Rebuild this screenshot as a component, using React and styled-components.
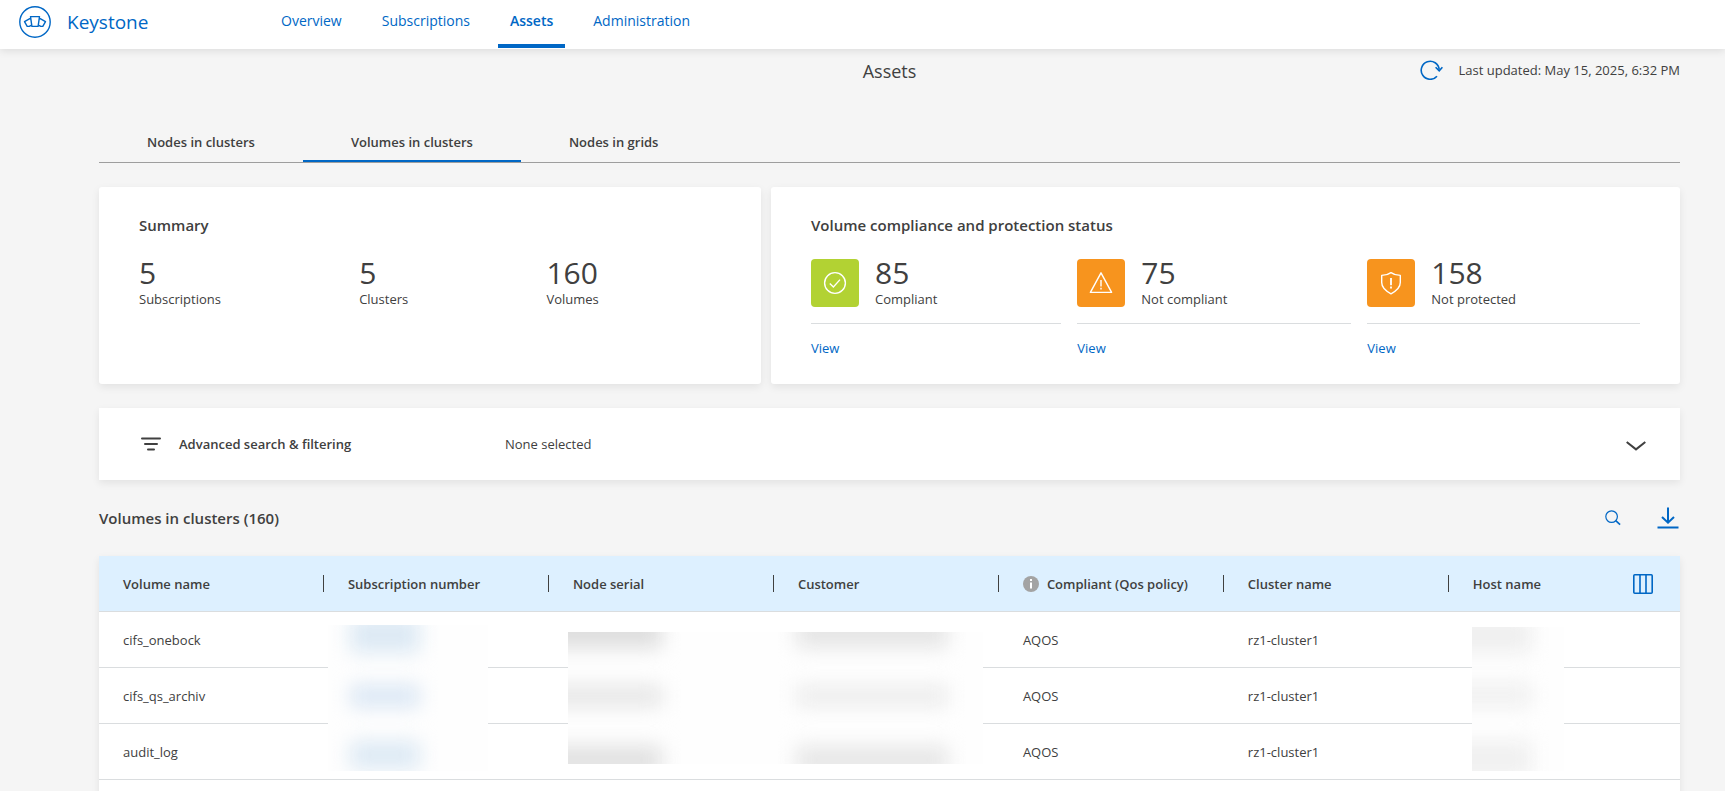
import React from "react";
import styled, { createGlobalStyle } from "styled-components";

const blue = "#0067c5";
const ink = "#404040";
const line = "#dadddf";

const GlobalStyle = createGlobalStyle`
  *, *::before, *::after { box-sizing: border-box; }
  body {
    margin: 0;
    background: #f5f5f5;
    color: ${ink};
    font-family: "Open Sans", "Noto Sans", sans-serif;
    font-size: 13px;
    line-height: 20px;
  }
  h1, h2, h3, p { margin: 0; }
  a { color: ${blue}; text-decoration: none; }
  button {
    display: inline-flex;
    align-items: center;
    padding: 0;
    border: 0;
    background: none;
    color: inherit;
    font: inherit;
    cursor: pointer;
  }
  svg { display: block; flex: none; }
`;

const Page = styled.div`
  height: 100vh;
  overflow: hidden;
`;

const Header = styled.header`
  position: relative;
  display: flex;
  height: 49px;
  padding-left: 19px;
  background: #fff;
  box-shadow: 0 2px 8px rgba(0, 0, 0, 0.1);
`;

const Brand = styled.a`
  display: flex;
  align-items: center;
  gap: 16px;
  width: 250px;
  padding-bottom: 6px;
  font-size: 19px;
`;

const BrandName = styled.span``;

const Nav = styled.nav`
  display: flex;
  gap: 16px;
  height: 48px;
`;

const NavLink = styled.a`
  padding: 10px 12px 0;
  border-bottom: 4px solid ${(p) => (p.$active ? blue : "transparent")};
  font-size: 14px;
  line-height: 22px;
  font-weight: ${(p) => (p.$active ? 600 : 400)};
`;

const Main = styled.main`
  padding: 10px 45px 0 99px;
`;

const TitleBar = styled.div`
  display: grid;
  grid-template-columns: 1fr auto 1fr;
  align-items: center;
  height: 24px;
`;

const PageTitle = styled.h1`
  grid-column: 2;
  font-size: 18px;
  font-weight: 400;
  line-height: 24px;
`;

const Updated = styled.div`
  display: flex;
  align-items: center;
  justify-content: flex-end;
  gap: 16px;
  padding-bottom: 2px;
`;

const Tabs = styled.div`
  display: flex;
  height: 40px;
  margin-top: 40px;
  border-bottom: 1px solid #9e9e9e;
`;

const Tab = styled.button`
  && {
    padding: 0 48px;
    border-bottom: 2px solid ${(p) => (p.$active ? blue : "transparent")};
    font-weight: 600;
  }
`;

const Cards = styled.div`
  display: grid;
  grid-template-columns: 662fr 909fr;
  gap: 10px;
  margin-top: 24px;
`;

const Card = styled.section`
  height: 197px;
  padding: 26px 40px 0;
  border-radius: 3px;
  background: #fff;
  box-shadow: 0 3px 8px rgba(0, 0, 0, 0.08);
`;

const CardTitle = styled.h2`
  font-size: 15px;
  line-height: 24px;
  font-weight: 600;
`;

const Stats = styled.div`
  display: flex;
  gap: 16px;
  margin-top: 22px;
`;

const Stat = styled.div`
  flex: 1 1 auto;
`;

const StatHead = styled.div`
  display: flex;
  gap: 16px;
  height: 48px;
`;

const StatValue = styled.p`
  padding-bottom: 2px;
  font-size: 30px;
  line-height: 28px;
`;

const StatLabel = styled.p`
  line-height: 20px;
`;

const StatLink = styled.div`
  margin-top: 16px;
  padding-top: 14px;
  border-top: 1px solid ${line};
`;

const Badge = styled.div`
  display: grid;
  place-items: center;
  width: 48px;
  height: 48px;
  border-radius: 4px;
  background: ${(p) => p.$color};
`;

const FilterBar = styled.section`
  display: flex;
  align-items: center;
  height: 72px;
  margin-top: 24px;
  padding: 0 34px 0 42px;
  background: #fff;
  box-shadow: 0 3px 8px rgba(0, 0, 0, 0.08);
`;

const FilterTitle = styled.h2`
  width: 326px;
  margin-left: 18px;
  font-size: 13px;
  font-weight: 600;
`;

const FilterState = styled.p`
  flex: 1;
`;

const ExpandButton = styled.button`
  && { padding-top: 3px; }
`;

const TableBar = styled.div`
  display: flex;
  align-items: center;
  justify-content: space-between;
  height: 24px;
  margin: 26px 0;
`;

const Actions = styled.div`
  display: flex;
  gap: 36px;
  padding-right: 1px;
  color: ${blue};
`;

const Table = styled.table`
  width: 100%;
  table-layout: fixed;
  border-collapse: separate;
  border-spacing: 0;
  background: #fff;
  box-shadow: 0 3px 8px rgba(0, 0, 0, 0.08);
`;

const HeadCell = styled.th`
  width: ${(p) => (p.$last ? "auto" : "14.23%")};
  height: 56px;
  padding: 0 0 0 24px;
  border-bottom: 1px solid ${line};
  background: #ddf0ff;
  text-align: left;
  font-weight: 600;
`;

const HeadContent = styled.div`
  display: flex;
  align-items: center;
  gap: 8px;
  padding-right: ${(p) => (p.$last ? "27px" : "0")};
  border-right: ${(p) => (p.$last ? "0" : `1px solid ${ink}`)};
  height: 17px;
  white-space: nowrap;

  button { margin-left: auto; color: ${blue}; }
`;

const Cell = styled.td`
  position: relative;
  height: 56px;
  padding: 0 24px;
  border-bottom: 1px solid ${line};
`;

const Veil = styled.div`
  position: absolute;
  z-index: 1;
  top: ${(p) => p.$top}px;
  left: ${(p) => p.$left}px;
  width: ${(p) => p.$width}px;
  height: ${(p) => p.$height}px;
  overflow: hidden;
  background: #fefefe;
`;

const Smudge = styled.span`
  position: absolute;
  left: ${(p) => p.$x}px;
  top: ${(p) => p.$y}px;
  width: ${(p) => p.$w}px;
  height: ${(p) => p.$h}px;
  background: ${(p) => p.$color};
  filter: blur(10px);
`;

const LogoIcon = () => (
  <svg width="32" height="32" viewBox="0 0 32 32" fill="none" stroke={blue} strokeWidth="1.4" strokeLinejoin="round">
    <circle cx="16" cy="16" r="15.2" />
    <path d="M11.500 10.600h9l-1.400 9.800h-6.200z" />
    <path d="M11.800 13l-1-.4-5.300 3 2.700 4.800h2l2-1M20.200 13l1-.4 5.300 3-2.700 4.800h-2l-2-1" />
  </svg>
);

const RefreshIcon = () => (
  <svg width="23" height="20" viewBox="0 0 23 20" fill="none" stroke={blue} strokeWidth="1.6">
    <path d="M17 16.2A9 9 0 1 1 19.2 9.6" />
    <path d="M15.6 7.2l3.6 3.6 3.2-3.6" />
  </svg>
);

const CheckIcon = () => (
  <svg width="24" height="24" viewBox="0 0 24 24" fill="none" stroke="#fff" strokeWidth="1.4">
    <circle cx="12" cy="12" r="10.4" />
    <path d="M6.8 12.4l3.6 3.5 6.6-7.3" />
  </svg>
);

const WarningIcon = () => (
  <svg width="24" height="24" viewBox="0 0 24 24" fill="none" stroke="#fff" strokeWidth="1.4" strokeLinejoin="round">
    <path d="M12 1.8L22.6 21.4H1.4z" />
    <path d="M12 9v6.4M12 16.8v1.8" />
  </svg>
);

const ShieldIcon = () => (
  <svg width="24" height="24" viewBox="0 0 24 24" fill="none" stroke="#fff" strokeWidth="1.4" strokeLinejoin="round">
    <path d="M12 1.6c2.8 2 6 2.7 9.3 2.8v7.2c0 5-4.3 8.6-9.3 11.2-5-2.6-9.3-6.2-9.3-11.2V4.4C6 4.3 9.2 3.600 12 1.600z" />
    <path d="M12 7v7.2M12 15.6v1.9" strokeWidth="1.8" />
  </svg>
);

const FilterIcon = () => (
  <svg width="20" height="14" viewBox="0 0 20 14" fill="none" stroke={ink} strokeWidth="2" strokeLinecap="round">
    <path d="M1 1.5h18M4 7h12M7 12.5h6" />
  </svg>
);

const ChevronIcon = () => (
  <svg width="20" height="10" viewBox="0 0 20 10" fill="none" stroke={ink} strokeWidth="2">
    <path d="M.7 1l9.3 7.4L19.3 1" />
  </svg>
);

const SearchIcon = () => (
  <svg width="16" height="16" viewBox="0 0 16 16" fill="none" stroke="currentColor" strokeWidth="1.2">
    <circle cx="6.6" cy="6.6" r="5.8" />
    <path d="M10.7 10.700l4.400 4" strokeWidth="1.600" />
  </svg>
);

const DownloadIcon = () => (
  <svg width="22" height="22" viewBox="0 0 22 22" fill="none" stroke="currentColor" strokeWidth="2">
    <path d="M11 .5v15M5 10l6 5.700L17 10M.5 20.500h21" />
  </svg>
);

const InfoIcon = () => (
  <svg width="16" height="16" viewBox="0 0 16 16">
    <circle cx="8" cy="8" r="8" fill="#a3a3a3" />
    <path d="M8 3v2M8 6.500v6" stroke="#fff" strokeWidth="2" />
  </svg>
);

const ColumnsIcon = () => (
  <svg width="20" height="20" viewBox="0 0 20 20" fill="none" stroke="currentColor" strokeWidth="1.6">
    <rect x=".8" y=".8" width="18.4" height="18.4" rx="1" />
    <path d="M7 1v18M13 1v18" />
  </svg>
);

const navItems = ["Overview", "Subscriptions", "Assets", "Administration"];
const tabItems = ["Nodes in clusters", "Volumes in clusters", "Nodes in grids"];

const summary = [
  { value: 5, label: "Subscriptions" },
  { value: 5, label: "Clusters" },
  { value: 160, label: "Volumes" },
];

const statuses = [
  { value: 85, label: "Compliant", color: "#b2d233", Icon: CheckIcon },
  { value: 75, label: "Not compliant", color: "#f7941e", Icon: WarningIcon },
  { value: 158, label: "Not protected", color: "#f7941e", Icon: ShieldIcon },
];

const columns = [
  "Volume name",
  "Subscription number",
  "Node serial",
  "Customer",
  "Compliant (Qos policy)",
  "Cluster name",
  "Host name",
];

const volumes = ["cifs_onebock", "cifs_qs_archiv", "audit_log", ""];

const veils = {
  subscription: {
    box: { $top: 13, $left: 4, $width: 160, $height: 146 },
    smudges: [
      { $x: 22, $y: -8, $w: 70, $h: 36, $color: "#dce9f4" },
      { $x: 22, $y: 60, $w: 70, $h: 22, $color: "#d9e6f4" },
      { $x: 22, $y: 116, $w: 70, $h: 28, $color: "#dce9f4" },
    ],
  },
  node: {
    box: { $top: 20, $left: 19, $width: 415, $height: 132 },
    smudges: [
      { $x: -24, $y: -16, $w: 118, $h: 32, $color: "#dddddd" },
      { $x: -24, $y: 54, $w: 118, $h: 20, $color: "#e4e4e4" },
      { $x: -24, $y: 114, $w: 118, $h: 28, $color: "#e0e0e0" },
      { $x: 228, $y: -16, $w: 152, $h: 32, $color: "#e5e5e5" },
      { $x: 228, $y: 54, $w: 152, $h: 20, $color: "#ebebeb" },
      { $x: 228, $y: 114, $w: 152, $h: 28, $color: "#e6e6e6" },
    ],
  },
  host: {
    box: { $top: 15, $left: 23, $width: 92, $height: 144 },
    smudges: [
      { $x: -24, $y: -10, $w: 84, $h: 36, $color: "#efefef" },
      { $x: -24, $y: 56, $w: 84, $h: 24, $color: "#f0f0f0" },
      { $x: -24, $y: 114, $w: 84, $h: 36, $color: "#f0f0f0" },
    ],
  },
};

const Redaction = ({ area }) => (
  <Veil {...area.box} aria-hidden="true">
    {area.smudges.map((s) => (
      <Smudge key={`${s.$x}-${s.$y}`} {...s} />
    ))}
  </Veil>
);

export default function App() {
  return (
    <Page>
      <GlobalStyle />
      <Header>
        <Brand href="#">
          <LogoIcon />
          <BrandName>Keystone</BrandName>
        </Brand>
        <Nav>
          {navItems.map((item) => (
            <NavLink key={item} href="#" $active={item === "Assets"}>
              {item}
            </NavLink>
          ))}
        </Nav>
      </Header>

      <Main>
        <TitleBar>
          <PageTitle>Assets</PageTitle>
          <Updated>
            <button aria-label="Refresh">
              <RefreshIcon />
            </button>
            <span>Last updated: May 15, 2025, 6:32 PM</span>
          </Updated>
        </TitleBar>

        <Tabs role="tablist">
          {tabItems.map((item, i) => (
            <Tab key={item} role="tab" aria-selected={i === 1} $active={i === 1}>
              {item}
            </Tab>
          ))}
        </Tabs>

        <Cards>
          <Card>
            <CardTitle>Summary</CardTitle>
            <Stats>
              {summary.map(({ value, label }) => (
                <Stat key={label}>
                  <StatValue>{value}</StatValue>
                  <StatLabel>{label}</StatLabel>
                </Stat>
              ))}
            </Stats>
          </Card>
          <Card>
            <CardTitle>Volume compliance and protection status</CardTitle>
            <Stats>
              {statuses.map(({ value, label, color, Icon }) => (
                <Stat key={label}>
                  <StatHead>
                    <Badge $color={color}>
                      <Icon />
                    </Badge>
                    <div>
                      <StatValue>{value}</StatValue>
                      <StatLabel>{label}</StatLabel>
                    </div>
                  </StatHead>
                  <StatLink>
                    <a href="#">View</a>
                  </StatLink>
                </Stat>
              ))}
            </Stats>
          </Card>
        </Cards>

        <FilterBar>
          <FilterIcon />
          <FilterTitle>Advanced search &amp; filtering</FilterTitle>
          <FilterState>None selected</FilterState>
          <ExpandButton aria-label="Expand filters">
            <ChevronIcon />
          </ExpandButton>
        </FilterBar>

        <TableBar>
          <CardTitle>Volumes in clusters (160)</CardTitle>
          <Actions>
            <button aria-label="Search">
              <SearchIcon />
            </button>
            <button aria-label="Download">
              <DownloadIcon />
            </button>
          </Actions>
        </TableBar>

        <Table>
          <thead>
            <tr>
              {columns.map((name, i) => (
                <HeadCell key={name} $last={i === 6}>
                  <HeadContent $last={i === 6}>
                    {i === 4 && <InfoIcon />}
                    {name}
                    {i === 6 && (
                      <button aria-label="Choose columns">
                        <ColumnsIcon />
                      </button>
                    )}
                  </HeadContent>
                </HeadCell>
              ))}
            </tr>
          </thead>
          <tbody>
            {volumes.map((name, i) => (
              <tr key={name}>
                <Cell>{name}</Cell>
                <Cell>{i === 0 && <Redaction area={veils.subscription} />}</Cell>
                <Cell>{i === 0 && <Redaction area={veils.node} />}</Cell>
                <Cell />
                <Cell>{name && "AQOS"}</Cell>
                <Cell>{name && "rz1-cluster1"}</Cell>
                <Cell>{i === 0 && <Redaction area={veils.host} />}</Cell>
              </tr>
            ))}
          </tbody>
        </Table>
      </Main>
    </Page>
  );
}
